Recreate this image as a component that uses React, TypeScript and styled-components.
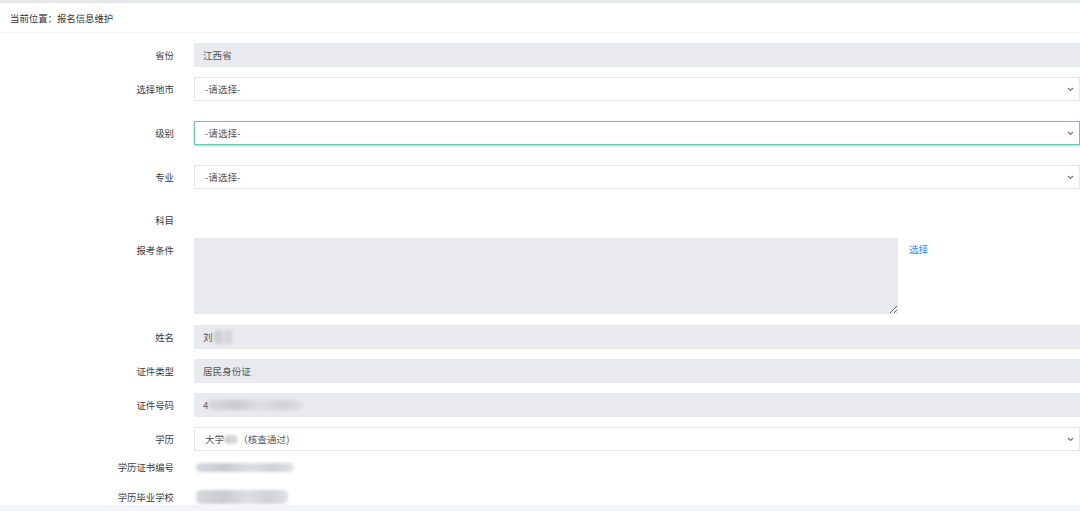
import { FC } from 'react';
import styled, { createGlobalStyle } from 'styled-components';

const GlobalStyle = createGlobalStyle`
  html, body {
    margin: 0;
    padding: 0;
    background: #f3f4f8;
  }
  body {
    font-family: "Noto Sans CJK SC", "Liberation Sans", sans-serif;
  }
`;

const Page = styled.div`
  width: 1080px;
  height: 511px;
  display: flex;
  flex-direction: column;
  background: #f3f4f8;
  overflow: hidden;
`;

const TopStrip = styled.div`
  height: 3px;
  flex: none;
  background: #e6e7eb;
`;

const Panel = styled.main`
  flex: 1;
  min-height: 0;
  overflow: hidden;
  background: #fff;
`;

const BottomStrip = styled.div`
  height: 6px;
  flex: none;
  background: #f3f4f8;
`;

const Crumb = styled.div`
  height: 29px;
  display: flex;
  align-items: center;
  padding-left: 10px;
  font-size: 9.4px;
  color: #333;
  border-bottom: 1px solid #efefef;
`;

const Form = styled.form`
  padding-top: 10px;
  display: flex;
  flex-direction: column;
`;

const Row = styled.div<{ $mt?: number; $top?: boolean }>`
  display: grid;
  grid-template-columns: 174px 1fr;
  column-gap: 20px;
  align-items: ${(p) => (p.$top ? 'start' : 'center')};
  margin-top: ${(p) => p.$mt ?? 0}px;
  min-height: 24px;
`;

const Label = styled.label`
  text-align: right;
  font-size: 9.4px;
  line-height: 24px;
  color: #3a3a3a;
  white-space: nowrap;
`;

const Field = styled.div<{ $filled?: boolean; $focus?: boolean }>`
  height: 24px;
  box-sizing: border-box;
  display: flex;
  align-items: center;
  padding: 0 8px 0 ${(p) => (p.$filled ? 8 : 10)}px;
  font-size: 9.6px;
  color: #555;
  background: ${(p) => (p.$filled ? '#e8eaed' : '#fff')};
  border: 1px solid ${(p) => (p.$filled ? '#e8eaed' : p.$focus ? '#66c9b0' : '#e6e6e6')};
  box-shadow: ${(p) => (p.$focus ? '0 1px 2px rgba(102, 201, 176, 0.7)' : 'none')};
`;

const SelectText = styled.span`
  flex: 1;
  display: flex;
  align-items: center;
`;

const Chevron = styled.svg`
  width: 7px;
  height: 5px;
  flex: none;
  margin-right: -3px;
`;

const AreaWrap = styled.div`
  display: flex;
  align-items: flex-start;
  gap: 11px;
`;

const Area = styled.textarea`
  width: 704px;
  height: 76px;
  box-sizing: border-box;
  margin: 0;
  border: none;
  background: #e8eaed;
  resize: both;
  outline: none;
  font-size: 10px;
`;

const PickLink = styled.a`
  font-size: 9.6px;
  color: #2d8cf0;
  margin-top: 4px;
  cursor: pointer;
`;

const Blur = styled.span<{ $w: number; $h?: number }>`
  display: inline-block;
  width: ${(p) => p.$w}px;
  height: ${(p) => p.$h ?? 11}px;
  border-radius: 5px;
  background: linear-gradient(90deg, #d6d8dc, #c9cbd0 30%, #dcdee1 55%, #cfd1d5 80%, #e0e1e4);
  filter: blur(1.5px);
`;

const PlainValue = styled.div`
  display: flex;
  align-items: center;
  gap: 6px;
  padding-left: 2px;
  height: 24px;
`;

const ChevronIcon: FC = () => (
  <Chevron viewBox="0 0 7 5">
    <path d="M1 1 L3.5 3.5 L6 1" fill="none" stroke="#777" strokeWidth="1.2" />
  </Chevron>
);

const Select: FC<{ value: string; focus?: boolean; children?: React.ReactNode }> = ({ value, focus, children }) => (
  <Field $focus={focus}>
    <SelectText>
      {value}
      {children}
    </SelectText>
    <ChevronIcon />
  </Field>
);

export default function App() {
  return (
    <Page>
      <GlobalStyle />
      <TopStrip />
      <Panel>
        <Crumb>当前位置：报名信息维护</Crumb>
        <Form>
          <Row>
            <Label>省份</Label>
            <Field $filled>江西省</Field>
          </Row>
          <Row $mt={10}>
            <Label>选择地市</Label>
            <Select value="-请选择-" />
          </Row>
          <Row $mt={20}>
            <Label>级别</Label>
            <Select value="-请选择-" focus />
          </Row>
          <Row $mt={20}>
            <Label>专业</Label>
            <Select value="-请选择-" />
          </Row>
          <Row $mt={19}>
            <Label>科目</Label>
            <div />
          </Row>
          <Row $mt={6} $top>
            <Label>报考条件</Label>
            <AreaWrap>
              <Area readOnly />
              <PickLink>选择</PickLink>
            </AreaWrap>
          </Row>
          <Row $mt={11}>
            <Label>姓名</Label>
            <Field $filled>
              刘<Blur $w={20} $h={14} />
            </Field>
          </Row>
          <Row $mt={10}>
            <Label>证件类型</Label>
            <Field $filled>居民身份证</Field>
          </Row>
          <Row $mt={10}>
            <Label>证件号码</Label>
            <Field $filled>
              4<Blur $w={95} $h={10} />
            </Field>
          </Row>
          <Row $mt={10}>
            <Label>学历</Label>
            <Select value="大学">
              <Blur $w={14} $h={9} />（核查通过)
            </Select>
          </Row>
          <Row $mt={4}>
            <Label>学历证书编号</Label>
            <PlainValue>
              <Blur $w={98} $h={9} />
            </PlainValue>
          </Row>
          <Row $mt={6}>
            <Label>学历毕业学校</Label>
            <PlainValue>
              <Blur $w={92} $h={14} />
            </PlainValue>
          </Row>
        </Form>
      </Panel>
      <BottomStrip />
    </Page>
  );
}
